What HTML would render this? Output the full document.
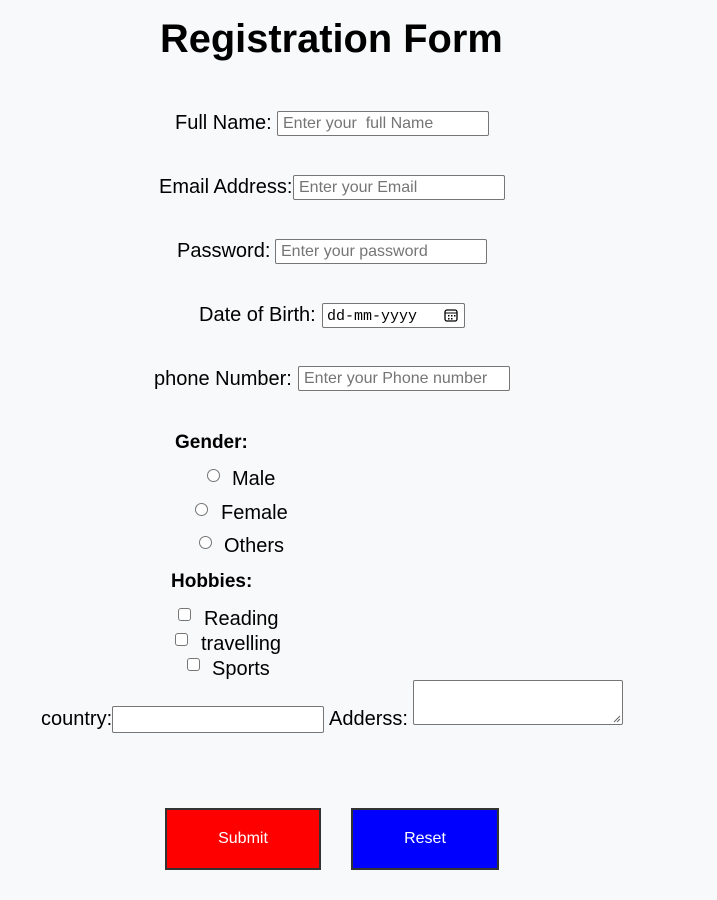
<!DOCTYPE html>
<html><head><style>
body{margin:0;background:#f8f9fa;width:717px;height:900px;position:relative;font-family:"Liberation Sans",Arial,sans-serif;color:#000;overflow:hidden}
.a{position:absolute;white-space:nowrap}
.l{font-size:20px;line-height:24px;margin-top:1px}
.in{position:absolute;box-sizing:border-box;height:25px;background:#fff;border:1px solid #767676;border-radius:2px;font-size:16px;color:#757575;padding:2px 0 0 5px;line-height:19px;white-space:nowrap;overflow:hidden}
.r{position:absolute;width:11px;height:11px;border:1px solid #767676;border-radius:50%;background:#fff}
.c{position:absolute;width:11px;height:11px;border:1px solid #767676;border-radius:3px;background:#fff}
.b{position:absolute;box-sizing:border-box;border:2px solid #333;color:#fff;font-size:16px;text-align:center;line-height:57px}
</style></head><body>
<div class="a" style="left:160px;top:15px;font-size:39.8px;font-weight:bold;line-height:48px">Registration Form</div>

<div class="a l" style="left:175px;top:110px">Full Name:</div>
<div class="in" style="left:277px;top:111px;width:212px">Enter your&nbsp; full Name</div>

<div class="a l" style="left:159px;top:174px">Email Address:</div>
<div class="in" style="left:293px;top:175px;width:212px">Enter your Email</div>

<div class="a l" style="left:177px;top:238px">Password:</div>
<div class="in" style="left:275px;top:239px;width:212px">Enter your password</div>

<div class="a l" style="left:199px;top:302px">Date of Birth:</div>
<div class="in" style="left:322px;top:303px;width:143px;font-family:'Liberation Mono',monospace;color:#000;font-size:15px;padding-left:4px;padding-top:3px">dd-mm-yyyy
<svg style="position:absolute;left:121px;top:5px" width="14" height="13" viewBox="0 0 14 13"><rect x="1" y="1" width="12" height="11" rx="2" fill="none" stroke="#000" stroke-width="1.3"/><line x1="1" y1="4" x2="13" y2="4" stroke="#000"/><g fill="#000"><rect x="4" y="6" width="1.5" height="1.5"/><rect x="7" y="6" width="1.5" height="1.5"/><rect x="10" y="6" width="1.5" height="1.5"/><rect x="4" y="9" width="1.5" height="1.5"/><rect x="7" y="9" width="1.5" height="1.5"/></g></svg></div>

<div class="a l" style="left:154px;top:366px">phone Number:</div>
<div class="in" style="left:298px;top:366px;width:212px">Enter your Phone number</div>

<div class="a" style="left:175px;top:431px;font-size:19px;font-weight:bold;line-height:23px">Gender:</div>
<div class="r" style="left:207px;top:469px"></div><div class="a l" style="left:232px;top:466px">Male</div>
<div class="r" style="left:195px;top:503px"></div><div class="a l" style="left:221px;top:500px">Female</div>
<div class="r" style="left:199px;top:536px"></div><div class="a l" style="left:224px;top:533px">Others</div>

<div class="a" style="left:171px;top:570px;font-size:19px;font-weight:bold;line-height:23px">Hobbies:</div>
<div class="c" style="left:178px;top:608px"></div><div class="a l" style="left:204px;top:606px">Reading</div>
<div class="c" style="left:175px;top:633px"></div><div class="a l" style="left:201px;top:631px">travelling</div>
<div class="c" style="left:187px;top:658px"></div><div class="a l" style="left:212px;top:656px">Sports</div>

<div class="a l" style="left:41px;top:706px">country:</div>
<div class="in" style="left:112px;top:706px;width:212px;height:27px"></div>
<div class="a l" style="left:329px;top:706px">Adderss:</div>
<div class="in" style="left:413px;top:680px;width:210px;height:45px">
<svg style="position:absolute;right:1px;bottom:1px" width="8" height="8"><path d="M7 1L1 7M7 4L4 7" stroke="#666"/></svg></div>

<div class="b" style="left:165px;top:808px;width:156px;height:62px;background:#f00">Submit</div>
<div class="b" style="left:351px;top:808px;width:148px;height:62px;background:#00f">Reset</div>
</body></html>
